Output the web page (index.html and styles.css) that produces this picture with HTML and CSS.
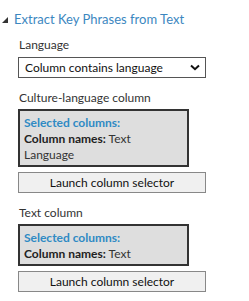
FILE: index.html
```html
<!DOCTYPE html>
<html lang="en">
<head>
  <meta charset="UTF-8" />
  <title>Extract Key Phrases from Text</title>
  <link rel="stylesheet" href="styles.css">
</head>
<body>
  <div class="panel">
    <div class="panel-title">
      <span class="caret"></span>
      <span>Extract Key Phrases from Text</span>
    </div>

    <div class="field field-first">
      <label class="field-label">Language</label>
      <div class="select">
        <span>Column contains language</span>
        <svg width="10" height="7" viewBox="0 0 10 7"><path d="M1 1.5 L5 5.2 L9 1.5" fill="none" stroke="#111" stroke-width="2"/></svg>
      </div>
    </div>

    <div class="field">
      <label class="field-label">Culture-language column</label>
      <div class="columns-box">
        <div class="columns-head">Selected columns:</div>
        <div><b>Column names:</b> Text</div>
        <div>Language</div>
      </div>
      <button class="launch">Launch column selector</button>
    </div>

    <div class="field">
      <label class="field-label">Text column</label>
      <div class="columns-box">
        <div class="columns-head">Selected columns:</div>
        <div><b>Column names:</b> Text</div>
      </div>
      <button class="launch">Launch column selector</button>
    </div>
  </div>
</body>
</html>
```

FILE: styles.css
```css
* { box-sizing: border-box; }

body { margin: 0; background: #fff; font-family: Lato, 'Noto Sans', sans-serif; font-size: 12px; color: #222; }

.panel { padding-top: 9px; }

.panel-title {
  display: flex;
  align-items: center;
  gap: 6px;
  padding-left: 2px;
  font-size: 13px;
  line-height: 20px;
  color: #3c87bf;
}

.caret {
  width: 0;
  height: 0;
  border-left: 6px solid transparent;
  border-bottom: 6px solid #333;
  margin-top: 2px;
}

.field { margin-left: 18px; width: 188px; }

.field-label { display: block; color: #333; margin: 12px 0 3px 1px; line-height: 16px; }

.field-first .field-label { margin-top: 8px; margin-bottom: 4px; }

.select {
  display: flex;
  justify-content: space-between;
  align-items: center;
  height: 21px;
  border: 1px solid #555;
  padding: 0 5px 0 6px;
  color: #111;
}

.columns-box {
  width: 171px;
  background: #dedede;
  border: 2px solid #333;
  padding: 4px 0 2px 4px;
  line-height: 16px;
  color: #333;
}

.columns-head { color: #2f8ac4; font-weight: bold; }

.columns-box b { color: #222; }

.launch {
  display: block;
  width: 188px;
  height: 21px;
  margin-top: 5px;
  background: #f0f0f0;
  border: 1px solid #888;
  font-family: inherit;
  font-size: 12px;
  color: #111;
  padding: 0;
}
```
